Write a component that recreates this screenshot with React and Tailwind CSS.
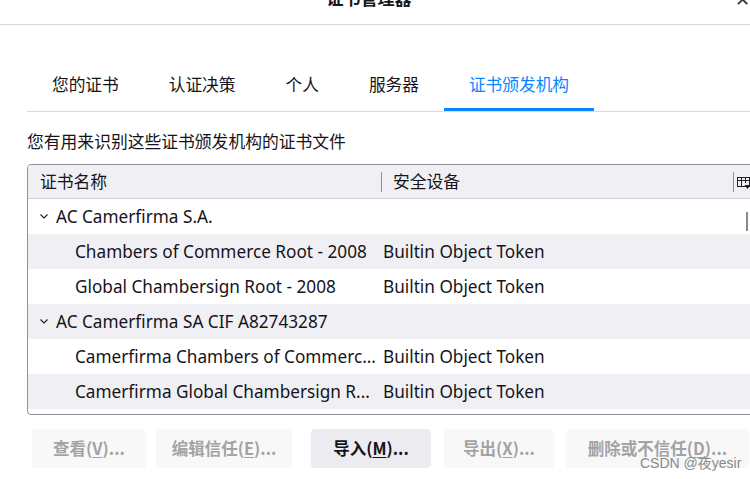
const TABS = [
  { label: '您的证书' },
  { label: '认证决策' },
  { label: '个人' },
  { label: '服务器' },
  { label: '证书颁发机构', active: true },
]

const ROWS = [
  { group: true, name: 'AC Camerfirma S.A.' },
  { name: 'Chambers of Commerce Root - 2008', device: 'Builtin Object Token' },
  { name: 'Global Chambersign Root - 2008', device: 'Builtin Object Token' },
  { group: true, name: 'AC Camerfirma SA CIF A82743287' },
  { name: 'Camerfirma Chambers of Commerc...', device: 'Builtin Object Token' },
  { name: 'Camerfirma Global Chambersign R...', device: 'Builtin Object Token' },
]

const BUTTONS = [
  { pre: '查看(', key: 'V', post: ')...', w: 'w-[114px]', ml: 'ml-[32px]' },
  { pre: '编辑信任(', key: 'E', post: ')...', w: 'w-[136px]', ml: 'ml-[10px]' },
  { pre: '导入(', key: 'M', post: ')...', w: 'w-[120px]', ml: 'ml-[19px]', enabled: true },
  { pre: '导出(', key: 'X', post: ')...', w: 'w-[110px]', ml: 'ml-[13px]' },
  { pre: '删除或不信任(', key: 'D', post: ')...', w: 'w-[183px]', ml: 'ml-[12px]' },
]

function Chevron() {
  return (
    <svg width="10" height="10" viewBox="0 0 10 10" className="shrink-0">
      <path d="M1.5 3.5 L5 7 L8.5 3.5" fill="none" stroke="#222" strokeWidth="1.1" />
    </svg>
  )
}

function ColumnPicker() {
  return (
    <svg width="14" height="14" viewBox="0 0 14 14">
      <rect x="0.5" y="1.5" width="12" height="9" fill="none" stroke="#222" strokeWidth="1" />
      <path d="M0.5 4.5 H12.5 M4.5 1.5 V10.5 M8.5 1.5 V7" stroke="#222" strokeWidth="1" />
      <path d="M7.5 9 H13.5 L10.5 13 Z" fill="#222" />
    </svg>
  )
}

export default function App() {
  return (
    <div
      className="relative w-[750px] h-[479px] overflow-hidden bg-white text-[#15141a]"
      style={{ fontFamily: '"Noto Sans", "Noto Sans CJK SC", sans-serif' }}
    >
      {/* dialog title, clipped at the top */}
      <div className="flow-root h-[25px] border-b border-[#d8d8d8] relative">
        <div className="text-center text-[17px] font-bold leading-[20px] -mt-[11px] pr-[12px]">证书管理器</div>
        <div className="absolute right-[0px] -top-[10px] text-[18px] leading-none text-[#333]">✕</div>
      </div>

      {/* tabs */}
      <div className="mt-[48px] ml-[27px] flex border-b border-[#d9d9de]">
        {TABS.map((t) => (
          <div
            key={t.label}
            className={`px-[25px] h-[38px] text-[16.7px] leading-[23px] border-b-[3px] ${
              t.active ? 'text-[#0a84ff] border-[#0a84ff]' : 'border-transparent'
            }`}
          >
            {t.label}
          </div>
        ))}
      </div>

      <div className="ml-[27px] mt-[19px] text-[16.8px] leading-[22px]">您有用来识别这些证书颁发机构的证书文件</div>

      {/* tree table */}
      <div className="ml-[27px] mt-[11px] w-[740px] h-[251px] border border-[#8f8f9d] rounded-[4px] overflow-hidden relative">
        <div className="h-[34px] bg-[#f0f0f4] border-b border-[#cfcfd8] flex items-center text-[16.8px]">
          <div className="w-[353px] pl-[12px]">证书名称</div>
          <div className="w-px h-[20px] bg-[#8f8f9d]" />
          <div className="w-[351px] pl-[11px]">安全设备</div>
          <div className="w-px h-[20px] bg-[#8f8f9d]" />
          <div className="pl-[3px] pt-[2px]">
            <ColumnPicker />
          </div>
        </div>
        {ROWS.map((r, i) => (
          <div
            key={r.name}
            className={`h-[35px] flex items-center text-[17.2px] ${i % 2 === 1 ? 'bg-[#f0f0f4]' : 'bg-white'}`}
          >
            {r.group ? (
              <div className="flex items-center pl-[11px] gap-[7px]">
                <Chevron />
                <span>{r.name}</span>
              </div>
            ) : (
              <>
                <div className="w-[355px] pl-[47px] whitespace-nowrap">{r.name}</div>
                <div className="whitespace-nowrap">{r.device}</div>
              </>
            )}
          </div>
        ))}
        <div className="absolute left-[718px] top-[47px] w-[2px] h-[19px] bg-[#8a8a8a]" />
      </div>

      {/* buttons */}
      <div className="flex mt-[14px]">
        {BUTTONS.map((b) => (
          <div
            key={b.key}
            className={`${b.w} ${b.ml} h-[39px] rounded-[4px] flex items-center justify-center text-[16.5px] font-bold ${
              b.enabled ? 'bg-[#ececf0] text-[#15141a]' : 'bg-[#f8f8f9] text-[#a3a3a6]'
            }`}
            style={{ fontFamily: '"Noto Sans CJK SC", sans-serif' }}
          >
            {b.pre}
            <span className="underline underline-offset-2">{b.key}</span>
            {b.post}
          </div>
        ))}
      </div>

      <div
        className="absolute left-[640px] top-[456px] text-[14px] leading-none text-[#8a8a8a]"
        style={{ fontFamily: '"Liberation Sans", "Noto Sans CJK SC", sans-serif' }}
      >
        CSDN @夜yesir
      </div>
    </div>
  )
}
